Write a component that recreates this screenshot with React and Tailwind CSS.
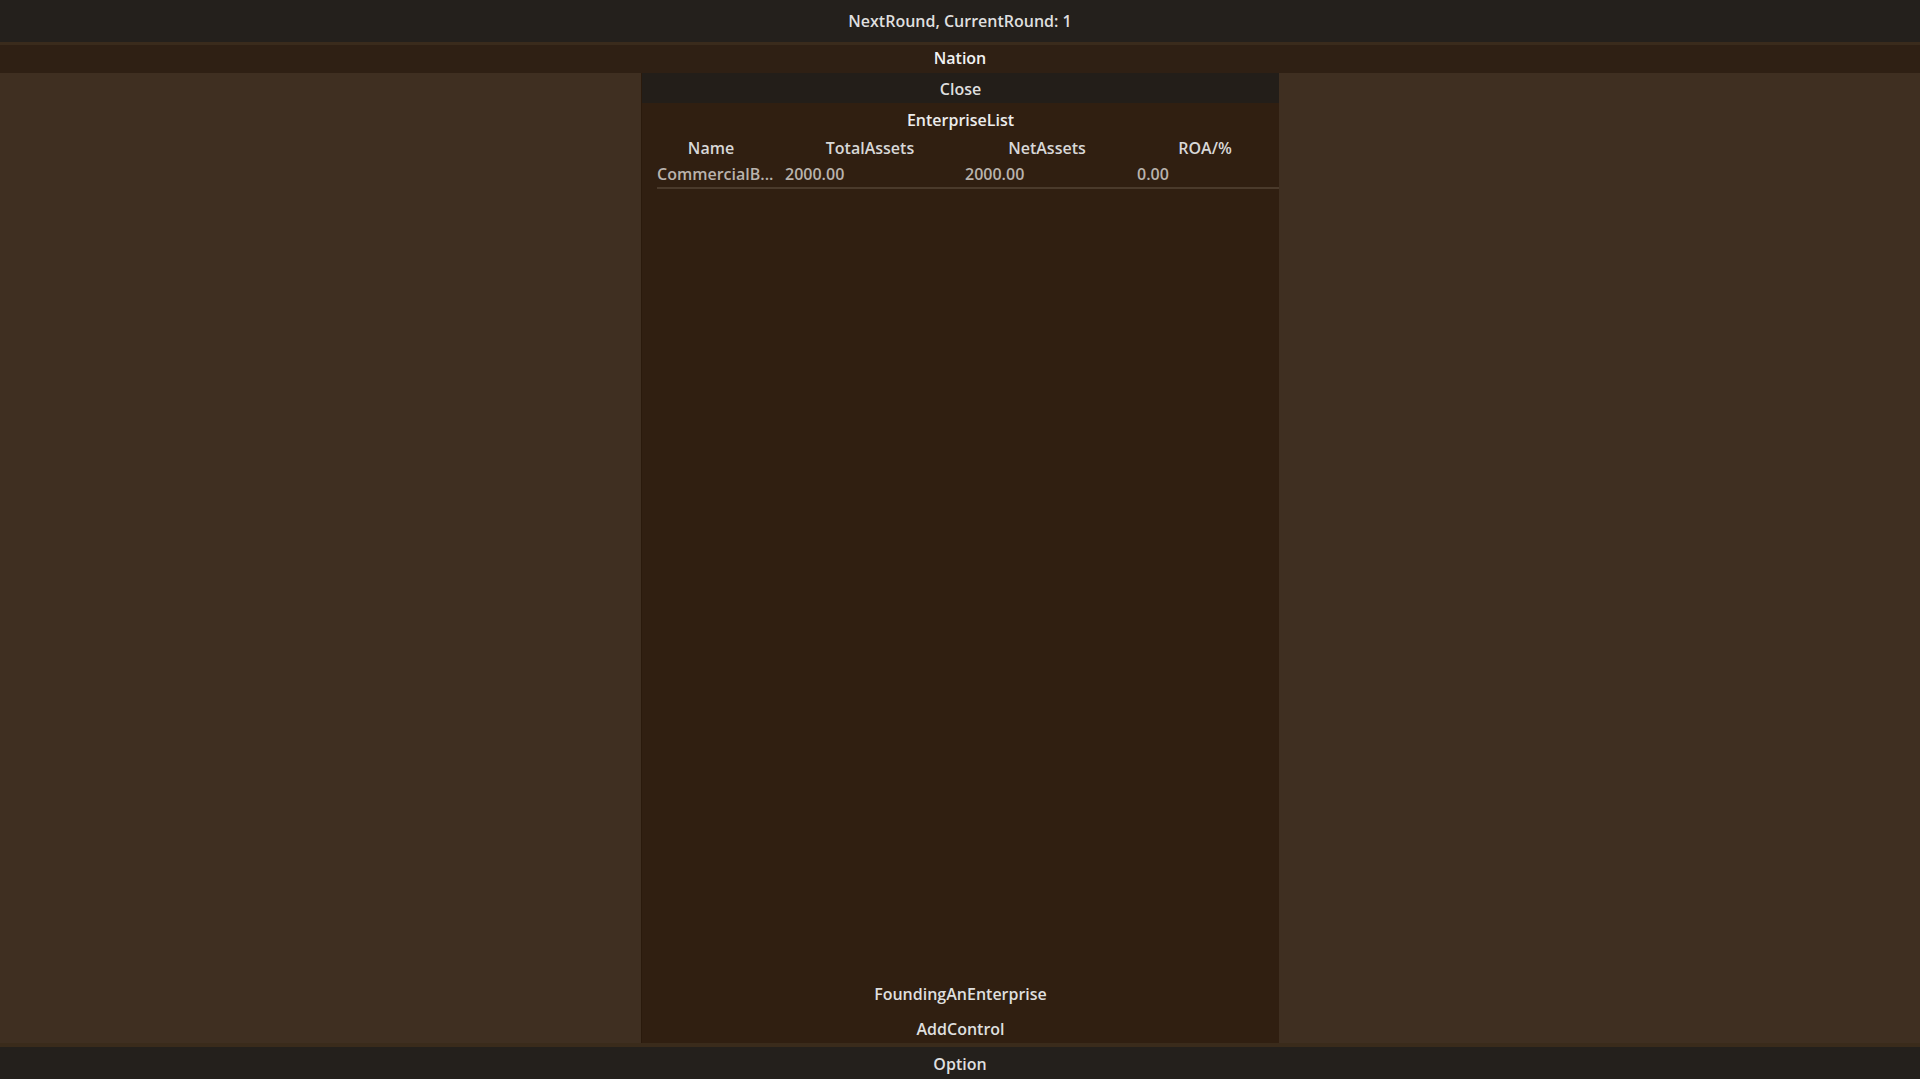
import React from "react";

const font = { fontFamily: '"Open Sans", "Noto Sans", sans-serif' };

const rows = [
  { name: "CommercialB...", total: "2000.00", net: "2000.00", roa: "0.00" },
];

const App = () => {
  return (
    <div
      className="h-[1079px] w-full flex flex-col bg-[#3f2f21] text-[16px] font-semibold text-[#dfdfdf] overflow-hidden"
      style={font}
    >
      {/* TOP BAR */}
      <div className="h-[42px] shrink-0 bg-[#24201c] flex items-center justify-center">
        NextRound, CurrentRound: 1
      </div>
      <div className="h-[3px] shrink-0 bg-[#3a2b1c]" />

      {/* NATION */}
      <div className="h-[28px] shrink-0 bg-[#2f2014] flex items-center justify-center pb-[2px] text-[#f2f2f2]">
        Nation
      </div>

      {/* MIDDLE */}
      <div className="flex-1 flex justify-center min-h-0">
        <div className="w-[638px] flex flex-col bg-[#301f11] border-l border-[#2a1a0c]">
          <div className="h-[30px] shrink-0 bg-[#231e19] flex items-center justify-center pt-[2px]">
            Close
          </div>

          <div className="h-[32px] shrink-0 flex items-end justify-center pb-[3px] text-[#ececec]">
            EnterpriseList
          </div>

          {/* TABLE */}
          <div className="pl-[15px]">
            <div className="grid grid-cols-[108px_210px_144px_1fr] h-[26px] items-center text-[#d8d8d8]">
              <div className="text-center">Name</div>
              <div className="text-center">TotalAssets</div>
              <div className="text-center">NetAssets</div>
              <div className="text-center pl-[12px]">ROA/%</div>
            </div>
            {rows.map((row, i) => (
              <div
                key={i}
                className="grid grid-cols-[120px_172px_164px_1fr] gap-x-[8px] h-[28px] items-center text-[#b9b3ad] border-b-2 border-[#4a3a2b]"
              >
                <div className="whitespace-nowrap overflow-hidden">{row.name}</div>
                <div>{row.total}</div>
                <div>{row.net}</div>
                <div>{row.roa}</div>
              </div>
            ))}
          </div>

          <div className="flex-1" />

          {/* BOTTOM ACTIONS */}
          <div className="h-[34px] shrink-0 flex items-center justify-center pb-[2px]">
            FoundingAnEnterprise
          </div>
          <div className="h-[31px] shrink-0 flex items-center justify-center pt-[3px]">
            AddControl
          </div>
        </div>
      </div>

      <div className="h-[4px] shrink-0 bg-[#3a2b1b]" />

      {/* OPTION */}
      <div className="h-[32px] shrink-0 bg-[#24201c] flex items-center justify-center pt-[1px]">
        Option
      </div>
    </div>
  );
};

export default App;
